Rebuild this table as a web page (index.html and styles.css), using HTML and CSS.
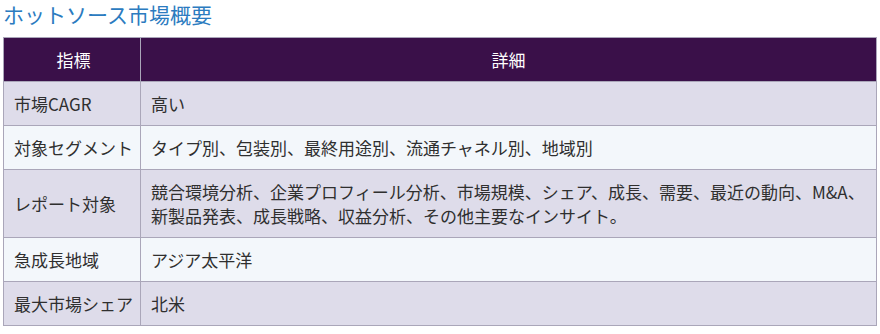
FILE: index.html
```html
<!DOCTYPE html>
<html lang="ja">
<head>
<meta charset="utf-8">
<link rel="stylesheet" href="styles.css">
</head>
<body>
<div class="wrap">
  <h2 class="title">ホットソース市場概要</h2>
  <table class="overview">
    <thead>
      <tr><th class="c1">指標</th><th>詳細</th></tr>
    </thead>
    <tbody>
      <tr class="odd"><td class="c1">市場CAGR</td><td>高い</td></tr>
      <tr class="even"><td class="c1">対象セグメント</td><td>タイプ別、包装別、最終用途別、流通チャネル別、地域別</td></tr>
      <tr class="odd"><td class="c1">レポート対象</td><td>競合環境分析、企業プロフィール分析、市場規模、シェア、成長、需要、最近の動向、M&amp;A、新製品発表、成長戦略、収益分析、その他主要なインサイト。</td></tr>
      <tr class="even"><td class="c1">急成長地域</td><td>アジア太平洋</td></tr>
      <tr class="odd"><td class="c1">最大市場シェア</td><td>北米</td></tr>
    </tbody>
  </table>
</div>
</body>
</html>
```
FILE: styles.css
```css
html, body { margin: 0; padding: 0; background: #fff; }
body { font-family: "Noto Sans CJK JP", "Noto Sans", sans-serif; color: #2f2f2f; }
.wrap { padding: 0 3px; }
.title {
  margin: 0;
  padding-top: 1px;
  height: 36px;
  font-size: 21px;
  line-height: 26px;
  font-weight: normal;
  color: #2b7bc0;
}
.overview {
  width: 874px;
  border-collapse: collapse;
  font-size: 17px;
  line-height: 24px;
}
.overview th, .overview td {
  border: 1px solid #aaa6b9;
  padding: 9.5px 10px;
  text-align: left;
  vertical-align: middle;
}
.overview th {
  background: #3a1049;
  color: #fff;
  font-weight: normal;
  text-align: center;
}
.overview .c1 { width: 119px; padding-right: 7px; white-space: nowrap; }
.overview th.c1 { text-align: center; }
.odd td { background: #dedcea; }
.even td { background: #f3f7fb; }
```
